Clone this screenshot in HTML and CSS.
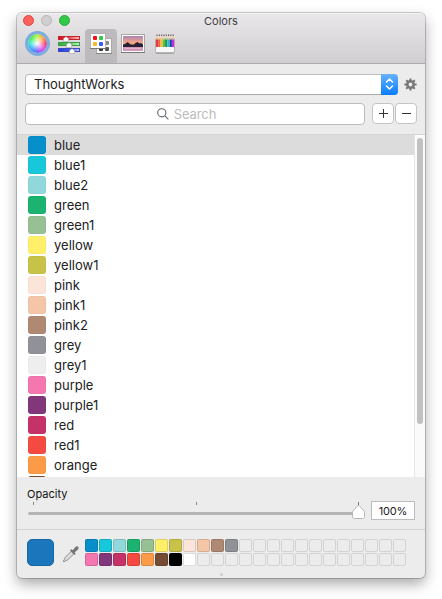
FILE: index.html
```
<!DOCTYPE html>
<html lang="en">
<head>
<meta charset="utf-8">
<title>Colors</title>
<link rel="stylesheet" href="styles.css">
</head>
<body>
<main class="window">
  <header class="titlebar">
    <div class="title-row">
      <div class="lights"><i class="close"></i><i class="min"></i><i class="max"></i></div>
      <h1>Colors</h1>
    </div>
    <nav class="tabs">
      <div class="tab"><span class="wheel"></span></div>
      <div class="tab">
        <svg width="32" height="32" viewBox="0 0 32 32">
          <defs>
            <linearGradient id="r"><stop offset="0" stop-color="#d90a18"/><stop offset=".4" stop-color="#e6303a"/><stop offset="1" stop-color="#ffc4c4"/></linearGradient>
            <linearGradient id="g"><stop offset="0" stop-color="#2fae40"/><stop offset=".5" stop-color="#55c660"/><stop offset="1" stop-color="#c6f5c4"/></linearGradient>
            <linearGradient id="b"><stop offset="0" stop-color="#2038e0"/><stop offset=".6" stop-color="#4563f2"/><stop offset="1" stop-color="#c4c8ff"/></linearGradient>
          </defs>
          <g stroke-width="1">
            <rect x="5.500" y="7.500" width="21" height="3" fill="url(#r)" stroke="#c4232c"/>
            <rect x="5.500" y="13.500" width="21" height="3" fill="url(#g)" stroke="#3b9c45"/>
            <rect x="5.500" y="19.500" width="21" height="3" fill="url(#b)" stroke="#3c4cc0"/>
          </g>
          <g fill="#fff" stroke="#666" stroke-width=".35">
            <path d="M13 7.400l2.700 2.400v2.600h-5.400v-2.600z"/>
            <path d="M16 13.400l2.700 2.400v2.600h-5.400v-2.600z"/>
            <path d="M19 19.400l2.700 2.400v2.600h-5.400v-2.600z"/>
          </g>
        </svg>
      </div>
      <div class="tab selected">
        <svg width="32" height="32" viewBox="0 0 32 32">
          <rect x="11.500" y="9.500" width="15" height="15" fill="#f7f7f7" stroke="#aaa"/>
          <path d="M11 24.500h16" stroke="#888"/>
          <rect x="20" y="12" width="4" height="4" rx="1" fill="#8c8c8c"/><rect x="14" y="18" width="4" height="4" rx="1" fill="#333"/><rect x="20" y="18" width="4" height="4" rx="1" fill="#555"/>
          <rect x="5.500" y="4.500" width="15" height="15" fill="#fff" stroke="#b3b1b3"/>
          <path d="M5 19.500h16" stroke="#777"/>
          <rect x="8" y="7" width="4" height="4" rx="1" fill="#fa0d1b"/><rect x="14" y="7" width="4" height="4" rx="1" fill="#32c84b"/>
          <rect x="8" y="13" width="4" height="4" rx="1" fill="#fdb827"/><rect x="14" y="13" width="4" height="4" rx="1" fill="#3457ff"/>
        </svg>
      </div>
      <div class="tab">
        <svg width="32" height="32" viewBox="0 0 32 32">
          <defs><linearGradient id="sky" x2="0" y2="1"><stop offset="0" stop-color="#a985b4"/><stop offset=".5" stop-color="#eda08f"/><stop offset="1" stop-color="#fdb869"/></linearGradient></defs>
          <rect x="4.500" y="5.500" width="23" height="18" fill="#fff" stroke="#aaa7ab"/>
          <path d="M4 23.500h24" stroke="#777"/>
          <rect x="6" y="7" width="20" height="11" fill="url(#sky)"/>
          <rect x="6" y="17" width="20" height="5" fill="#cf98b7"/>
          <path d="M6 15.500l2-.5 2.500-2 2 1.500 1.500 1h3l1.500-1.500 2-1 2 1.500 1.500-.5 2 1.500v2.500H6z" fill="#2c2038"/>
          <path d="M8 19.500h16" stroke="#e5b3cb"/>
        </svg>
      </div>
      <div class="tab">
        <svg width="32" height="32" viewBox="0 0 32 32">
          <rect x="6.500" y="10" width="19" height="14" rx="1" fill="#eee" stroke="#999" stroke-width=".6"/>
          <g stroke-width="2.200">
            <path d="M8 9.500v9.500" stroke="#e53a38"/><path d="M10.300 9.500v9.500" stroke="#ef5b49"/><path d="M12.600 9.500v9.500" stroke="#eac32d"/><path d="M14.900 9.500v9.500" stroke="#64bd38"/><path d="M17.200 9.500v9.500" stroke="#119b4e"/><path d="M19.500 9.500v9.500" stroke="#21bbd9"/><path d="M21.800 9.500v9.500" stroke="#273cae"/><path d="M24.100 9.500v9.500" stroke="#c02fd1"/>
          </g>
          <path d="M7 10.500l1-4 1.200 4 1.100-4 1.200 4 1.100-4 1.200 4 1.100-4 1.200 4 1.100-4 1.200 4 1.100-4 1.200 4 1.100-4 1.200 4 1.100-4 1.200 4z" fill="#ecd09b"/>
          <path d="M7.500 6.200h18" stroke="#655" stroke-width="1.600" stroke-dasharray="1.100 1.200"/>
          <rect x="7" y="18" width="18" height="5.500" fill="#f8f8f8"/>
          <path d="M7 24h18" stroke="#888"/>
        </svg>
      </div>
    </nav>
  </header>

  <section class="controls">
    <div class="line">
      <div class="select"><span>ThoughtWorks</span>
        <b><svg width="17" height="20" viewBox="0 0 17 20" fill="none" stroke="#fff" stroke-width="1.500" stroke-linecap="round" stroke-linejoin="round"><path d="M5.500 8l3-3 3 3M5.500 12l3 3 3-3"/></svg></b>
      </div>
      <svg class="gear" width="13" height="13" viewBox="-6.500 -6.500 13 13" stroke="#777"><circle r="3.200" fill="none" stroke-width="2.500"/><path stroke-width="2" d="M0-6.100V-3.500M0 6.100V3.500M-6.100 0H-3.500M6.100 0H3.500M-4.300-4.300L-2.600-2.600M4.300 4.300L2.600 2.600M-4.300 4.300L-2.600 2.600M4.300-4.300L2.600-2.600"/></svg>
    </div>
    <div class="line second">
      <div class="search"><svg width="12" height="12" viewBox="0 0 12 12" fill="none" stroke="#666" stroke-width="1.100"><circle cx="4.800" cy="4.800" r="4.100"/><path d="M7.800 7.800l3.600 3.600"/></svg><span>Search</span></div>
      <div class="buttons">
        <button aria-label="Add"><svg width="9" height="9" viewBox="0 0 9 9" stroke="#333"><path d="M0 4.500h9M4.500 0v9"/></svg></button>
        <button aria-label="Remove"><svg width="9" height="9" viewBox="0 0 9 9" stroke="#333"><path d="M0 4.500h9"/></svg></button>
      </div>
    </div>
  </section>

  <section class="list">
    <ul id="names"></ul>
    <div class="scroll"><i></i></div>
  </section>

  <section class="opacity">
    <label>Opacity</label>
    <div class="opacity-row">
      <svg width="340" height="20" viewBox="0 0 340 20">
        <rect x="1" y="11" width="334" height="3" rx="1.500" fill="#b5b5b5"/>
        <path d="M6.500 1v3M169.500 1v3" stroke="#888"/>
        <path d="M331.500 4.500c.6 0 1 .4 1.500 1l3.700 4.200c.6.700.8 1.200.8 2v3.800c0 1.200-.8 2-2 2h-8c-1.200 0-2-.8-2-2v-3.800c0-.8.200-1.300.8-2l3.700-4.200c.5-.6.900-1 1.500-1z" fill="#fff" stroke="#b4b4b4"/>
        <path d="M331.500 1v3" stroke="#777"/>
      </svg>
      <div class="value">100%</div>
    </div>
  </section>

  <footer>
    <div class="current"></div>
    <svg class="dropper" width="18" height="18" viewBox="0 0 18 18">
      <path d="M9.300 6.300l2.500 2.500-6 6-2.300 1-1.600 1.100-.7-.7 1.100-1.600 1-2.300z" fill="#ddd" stroke="#858585" stroke-width=".9"/>
      <path d="M8 5.500l1.300-1.200 1.500 1 2.400-3c1-1.200 2.200-1.300 3-.5.700.8.600 2-.5 3l-3 2.400 1 1.500-1.200 1.300z" fill="#747474"/>
    </svg>
    <div class="grid" id="grid"></div>
  </footer>
  <div class="grip"></div>
</main>
<script src="app.js"></script>
</body>
</html>
```
FILE: styles.css
```
* { box-sizing: border-box; }
body {
  margin: 0;
  height: 599px;
  padding: 13px 17px 0;
  background: #fff;
  font: 13px/20px Inter, "Liberation Sans", sans-serif;
  color: #222;
  overflow: hidden;
}
.window {
  display: flex;
  flex-direction: column;
  width: 408px;
  height: 565px;
  border-radius: 5px;
  overflow: hidden;
  background: #ececec;
  box-shadow: 0 0 0 1px rgba(0, 0, 0, .19), 0 6px 14px rgba(0, 0, 0, .34);
}
.titlebar {
  flex: none;
  height: 51px;
  border-bottom: 1px solid #adabad;
  background: linear-gradient(#e9e7e9, #d1ced1);
  box-shadow: inset 0 1px #f5f4f5;
}
.title-row { display: grid; grid-template-columns: 1fr auto 1fr; height: 16px; }
.title-row h1 { margin: 0; font-size: 11px; font-weight: 400; line-height: 17px; letter-spacing: 0; color: #403e40; }
.lights { display: flex; gap: 7px; padding: 2px 0 0 6px; }
.lights i { width: 11px; height: 11px; border-radius: 50%; border: 1px solid; }
.close { background: #fc605b; border-color: #df4744 !important; }
.min { background: #d0cfd0; border-color: #b8b6b8 !important; }
.max { background: #34c84a; border-color: #26a934 !important; }
.tabs { display: flex; padding-left: 4px; }
.tab { width: 32px; height: 34px; }
.tab svg { display: block; }
.tab.selected { background: #bdbabd; border-radius: 4px 4px 0 0; }
.wheel {
  display: block;
  width: 25px;
  height: 25px;
  margin: 2px 4px;
  border: 3px solid #7baddd;
  border-radius: 50%;
  background: radial-gradient(circle, #fff 0, rgba(255, 255, 255, .65) 22%, rgba(255, 255, 255, 0) 62%) padding-box,
    conic-gradient(from 90deg, #f34270, #e747ef, #7756ff, #31a5ff, #38e4d4, #4bee50, #b5f443, #ff9a45, #f34270) padding-box;
}
.controls { flex: none; height: 71px; padding: 10px 8px 0 9px; border-bottom: 1px solid #d4d4d4; }
.line { display: flex; justify-content: space-between; align-items: center; }
.line.second { margin-top: 8px; align-items: flex-start; }
.select {
  display: flex;
  justify-content: space-between;
  width: 373px;
  height: 21px;
  margin-left: -1px;
  padding-left: 8px;
  border: 1px solid #bdbdbd;
  border-bottom-color: #a9a9a9;
  border-radius: 4px;
  background: #fff;
  line-height: 19px;
}
.select b { width: 17px; height: 21px; margin: -1px; border-radius: 0 4px 4px 0; background: linear-gradient(#68b2fa, #077dff); }
.select b svg { display: block; }
.gear { display: block; }
.search {
  display: flex;
  align-items: center;
  justify-content: center;
  gap: 5px;
  width: 340px;
  height: 22px;
  margin-left: -1px;
  padding-right: 17px;
  border: 1px solid #bcbcbc;
  border-radius: 4px;
  background: #fff;
  color: #bdbdbd;
  letter-spacing: -.1px;
}
.buttons { display: flex; gap: 1px; }
button {
  display: flex;
  align-items: center;
  justify-content: center;
  width: 22px;
  height: 21px;
  padding: 0;
  border: 1px solid #c4c4c4;
  border-radius: 4px;
  background: #fff;
}
.list { display: flex; flex: none; height: 342px; overflow: hidden; background: #fff; }
.list ul { flex: 1; margin: 0; padding: 0; list-style: none; }
.list li { display: flex; gap: 8px; height: 20px; padding: 1px 11px; line-height: 19px; }
.list li:first-child { background: #dcdcdc; }
.list li i { width: 18px; height: 18px; border-radius: 3px; background: var(--c); box-shadow: inset 0 0 0 1px rgba(0, 0, 0, .025); }
.scroll { width: 11px; padding: 3px 2px; border-left: 1px solid #e6e6e6; background: #fafafa; }
.scroll i { display: block; width: 6px; height: 286px; border-radius: 3px; background: #c1c1c1; }
.opacity { flex: none; height: 53px; padding: 9px 10px 0; border-bottom: 1px solid #d2d2d2; }
.opacity label { display: block; height: 15px; font-size: 11px; line-height: 17px; color: #111; }
.opacity-row { display: flex; gap: 4px; }
.opacity-row svg { flex: none; }
.value { width: 44px; height: 19px; border: 1px solid #bcbcbc; background: #fff; font-size: 11px; line-height: 18px; letter-spacing: -.2px; text-align: center; }
footer { display: flex; height: 38px; padding: 9px 10px 0; }
.current { width: 27px; height: 27px; border: 1px solid #1767a5; border-radius: 5px; background: #1b76bb; }
.dropper { margin: 6px 0 0 8px; }
.grid { display: grid; grid-template-columns: repeat(23, 13px); grid-auto-rows: 13px; gap: 1px; margin-left: 5px; }
.grid i { border: 1px solid #d3d3d3; border-radius: 2px; }
.grid i.filled { background: var(--c); border-color: rgba(0, 0, 0, .13); }
.grip { width: 3px; height: 3px; margin: 5px auto 0; border-radius: 50%; background: #ccc; }
```
FILE: app.js
```
const colors = [
  ['blue', '#078fcc'], ['blue1', '#18c7d9'], ['blue2', '#91d8dd'], ['green', '#1bb36f'],
  ['green1', '#98c095'], ['yellow', '#ffef69'], ['yellow1', '#c9c248'], ['pink', '#fce5d8'],
  ['pink1', '#f5c5a8'], ['pink2', '#b08972'], ['grey', '#909297'], ['grey1', '#eeeeef'],
  ['purple', '#f477b0'], ['purple1', '#83377b'], ['red', '#c53268'], ['red1', '#f54a41'],
  ['orange', '#fb9b48']
];
const brown = '#754c33';
const list = document.getElementById('names');
// The last row is scrolled almost out of view, so it only needs its swatch.
[...colors, ['', brown]].forEach(([name, color]) => {
  const row = document.createElement('li');
  const chip = document.createElement('i');
  chip.style.setProperty('--c', color);
  row.append(chip, name);
  list.append(row);
});
const c = Object.fromEntries(colors);
const cells = Array(46).fill(null);
['blue', 'blue1', 'blue2', 'green', 'green1', 'yellow', 'yellow1', 'pink', 'pink1', 'pink2', 'grey']
  .forEach((n, i) => { cells[i] = c[n]; });
[c.purple, c.purple1, c.red, c.red1, c.orange, brown, '#000', '#fff']
  .forEach((v, i) => { cells[23 + i] = v; });
const grid = document.getElementById('grid');
cells.forEach(v => {
  const cell = document.createElement('i');
  if (v) {
    cell.className = 'filled';
    cell.style.setProperty('--c', v);
  }
  grid.append(cell);
});
```
